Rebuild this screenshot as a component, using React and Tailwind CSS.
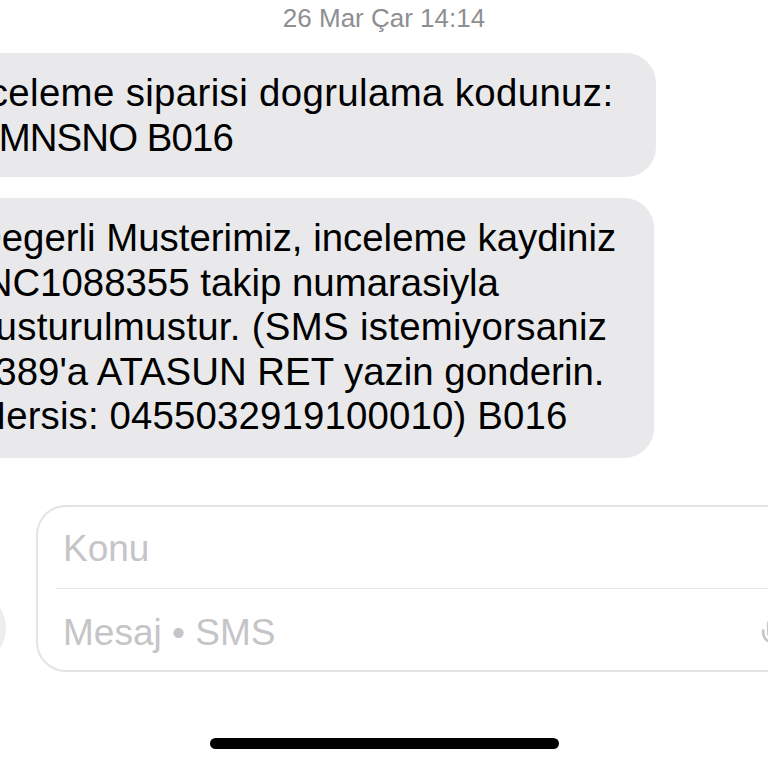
import React from "react";
import { Mic } from "lucide-react";

const bubble1 = [
  { t: "İnceleme siparisi dogrulama kodunuz:", c: "ml-[-18px] tracking-[0.36px]" },
  { t: "SMNSNO B016", c: "tracking-[-0.9px]" },
];
const bubble2 = [
  { t: "Degerli Musterimiz, inceleme kaydiniz", c: "" },
  { t: "INC1088355 takip numarasiyla", c: "" },
  { t: "olusturulmustur. (SMS istemiyorsaniz", c: "ml-[-9px] tracking-[0.3px]" },
  { t: "3389'a ATASUN RET yazin gonderin.", c: "" },
  { t: "Mersis: 0455032919100010) B016", c: "tracking-[0.15px]" },
];

function Bubble({ lines, width, pb }) {
  return (
    <div
      className={`ml-[-46px] shrink-0 rounded-[30px] bg-[#e9e9eb] pl-[20px] pt-[18px] text-[38.4px] leading-[44.5px] text-black ${width} ${pb}`}
    >
      {lines.map((l) => (
        <div key={l.t} className={`whitespace-nowrap ${l.c}`}>
          {l.t}
        </div>
      ))}
    </div>
  );
}

export default function App() {
  return (
    <div
      className="flex h-[768px] w-[768px] flex-col overflow-hidden bg-white"
      style={{ fontFamily: '"Liberation Sans", Arial, sans-serif' }}
    >
      <div className="pt-[3px] text-center text-[26px] leading-[30px] text-[#8e8e93]">
        26 Mar Çar 14:14
      </div>

      <div className="mt-[20px] flex flex-col gap-[21px]">
        <Bubble lines={bubble1} width="w-[702px]" pb="pb-[17px]" />
        <Bubble lines={bubble2} width="w-[700px]" pb="pb-[19px]" />
      </div>

      <div className="mt-[47px] flex items-end">
        <div className="mb-[6px] ml-[-70px] h-[76px] w-[76px] shrink-0 rounded-full bg-[#ededef]" />
        <div className="ml-[30px] w-[760px] shrink-0 rounded-[30px] border-2 border-[#e4e4e6] pb-[15px] pt-[20px] text-[37px] leading-[44px] text-[#c5c5c7]">
          <div className="pl-[25px]">Konu</div>
          <div className="ml-[18px] mt-[17px] h-[1.5px] bg-[#e6e6e8]" />
          <div className="mt-[22px] flex items-center pl-[25px]">
            <span>Mesaj • SMS</span>
            <span className="ml-auto mr-[7px] flex items-center text-[#c7c7cc]">
              <Mic size={30} strokeWidth={2.2} />
            </span>
          </div>
        </div>
      </div>

      <div className="mt-[66px] flex justify-center">
        <div className="h-[11px] w-[349px] rounded-full bg-black" />
      </div>
    </div>
  );
}
